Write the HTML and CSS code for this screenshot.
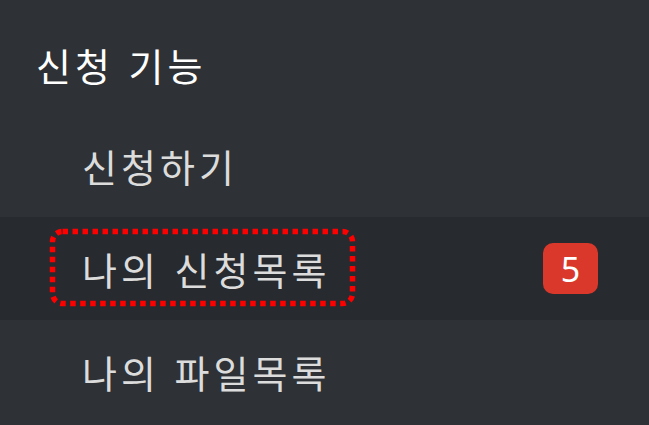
FILE: index.html
```html
<!DOCTYPE html>
<html lang="ko">
<head>
<meta charset="utf-8">
<link rel="stylesheet" href="styles.css">
</head>
<body>
<nav class="sidebar">
  <div class="section-title">신청 기능</div>
  <ul class="menu">
    <li class="item"><span class="label">신청하기</span></li>
    <li class="item active">
      <span class="label">나의 신청목록<svg class="focus-ring" width="312" height="82" viewBox="0 0 312 82"><rect x="4.5" y="4.5" width="300" height="72" rx="10" ry="10" fill="none" stroke="#ff0000" stroke-width="5.5" stroke-dasharray="5.5 4.5"/></svg></span>
      <span class="badge">5</span>
    </li>
    <li class="item"><span class="label">나의 파일목록</span></li>
  </ul>
</nav>
</body>
</html>
```

FILE: styles.css
```css
html, body {
  margin: 0;
  padding: 0;
  background: #2e3236;
  width: 649px;
  height: 425px;
  overflow: hidden;
}
.sidebar {
  font-family: "Noto Sans CJK KR", "Noto Sans", sans-serif;
  color: #dcdcdc;
}
.section-title {
  height: 114px;
  box-sizing: border-box;
  padding: 40px 0 0 36px;
  font-size: 38px;
  letter-spacing: 4px;
  font-weight: 400;
  line-height: 50px;
  color: #ffffff;
}
.menu {
  list-style: none;
  margin: 0;
  padding: 0;
}
.item {
  height: 103px;
  display: flex;
  align-items: center;
  padding-left: 82px;
  padding-right: 51px;
  font-size: 38px;
  letter-spacing: 4px;
}
.item.active {
  background: #272a2f;
}
.label {
  position: relative;
  flex: 1;
  line-height: 50px;
}
.focus-ring {
  position: absolute;
  left: -34px;
  top: -17px;
}
.badge {
  width: 55px;
  height: 51px;
  border-radius: 10px;
  background: #d9382a;
  color: #ffffff;
  font-family: "Noto Sans", sans-serif;
  font-size: 34px;
  font-weight: 400;
  letter-spacing: 0;
  display: flex;
  align-items: center;
  justify-content: center;
}
```
